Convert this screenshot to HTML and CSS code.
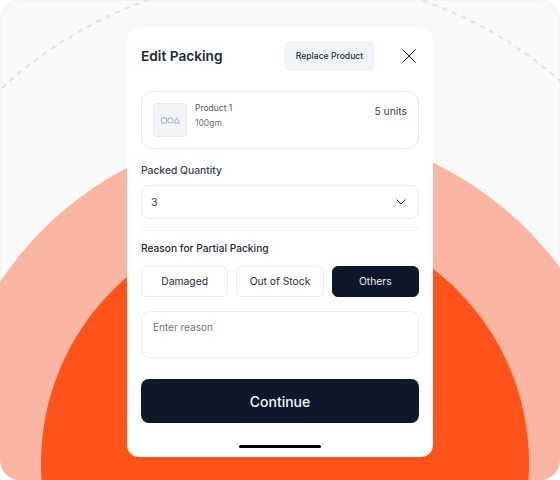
FILE: index.html
```html
<!DOCTYPE html>
<html lang="en">
<head>
<meta charset="utf-8">
<title>Edit Packing</title>
<link rel="stylesheet" href="styles.css">
</head>
<body>
<div class="stage">
  <svg class="backdrop" width="560" height="480" viewBox="0 0 560 480" aria-hidden="true">
    <circle cx="285" cy="393" r="416" fill="none" stroke="#e2e2e4" stroke-width="2" stroke-dasharray="5 5.500"/>
    <circle cx="285" cy="471" r="342" fill="#fbb5a3"/>
    <circle cx="285" cy="463" r="244" fill="#ff5319"/>
  </svg>
  <main class="card">
    <header class="head">
      <h1 class="title">Edit Packing</h1>
      <button class="replace">Replace Product</button>
      <svg class="close" width="14" height="14" viewBox="0 0 14 14" aria-hidden="true"><path d="M.5.5l13 13M13.5.5l-13 13" fill="none" stroke="#0f172a" stroke-width="1"/></svg>
    </header>
    <section class="product">
      <div class="thumb">
        <svg width="19" height="7" viewBox="0 0 19 7" aria-hidden="true"><g fill="none" stroke="#8b97a8" stroke-width=".7"><rect x=".4" y="1" width="5.200" height="5" rx=".4"/><circle cx="9.500" cy="3.500" r="2.600"/><path d="M15.800.8l2.800 5.200h-5.600z"/></g></svg>
      </div>
      <div class="info">
        <div class="name">Product 1</div>
        <div class="weight">100gm</div>
      </div>
      <div class="units">5 units</div>
    </section>
    <label class="label qty-label">Packed Quantity</label>
    <div class="select">
      <span>3</span>
      <svg width="10" height="6" viewBox="0 0 10 6" aria-hidden="true"><path d="M.5.5L5 5 9.500.5" fill="none" stroke="#1e293b" stroke-width="1"/></svg>
    </div>
    <hr class="rule">
    <div class="label reason-label">Reason for Partial Packing</div>
    <div class="chips">
      <button class="chip">Damaged</button>
      <button class="chip">Out of Stock</button>
      <button class="chip chip-on">Others</button>
    </div>
    <div class="reason">Enter reason</div>
    <button class="continue">Continue</button>
    <div class="home"></div>
  </main>
</div>
</body>
</html>
```

FILE: styles.css
```css
* { box-sizing: border-box; }
html, body { margin: 0; padding: 0; background: #fff; }
body { font-family: Inter, "Liberation Sans", sans-serif; color: #0f172a; }
.stage {
  position: relative;
  width: 560px;
  height: 480px;
  background: #f9f9fa;
  box-shadow: inset 0 0 0 1px #f3f3f4;
  border-radius: 20px;
  overflow: hidden;
  padding-top: 27px;
  display: flex;
  justify-content: center;
  align-items: flex-start;
}
.backdrop { position: absolute; left: 0; top: 0; }
.card {
  position: relative;
  width: 306px;
  height: 430px;
  background: #fff;
  border-radius: 12px;
  padding: 14px 14px 0;
  display: flex;
  flex-direction: column;
}
.head { display: flex; align-items: center; height: 30px; }
.title { margin: -1px 0 0; font-size: 13.700px; font-weight: 600; color: #1e293b; flex: 1; }
.replace {
  width: 91px;
  height: 30px;
  border: 0;
  border-radius: 6px;
  background: #f1f5f9;
  font: 500 8.600px Inter, sans-serif;
  color: #1e293b;
  padding: 0;
}
.close { margin: 0 3px 0 27px; }
.product {
  margin-top: 20px;
  height: 58px;
  border: 1px solid #e2e8f0;
  border-radius: 12px;
  padding: 11px;
  display: flex;
}
.thumb {
  width: 34px;
  height: 34px;
  background: #f1f5f9;
  border: 1px solid #e8edf3;
  border-radius: 4px;
  display: flex;
  align-items: center;
  justify-content: center;
}
.info { flex: 1; margin-left: 8px; font-size: 8.500px; color: #475569; }
.name { line-height: 11px; }
.weight { line-height: 11px; margin-top: 4px; color: #64748b; }
.units { font-size: 10.300px; line-height: 14px; color: #334155; margin-top: 1px; }
.label { display: block; font-size: 10.300px; font-weight: 500; line-height: 14px; color: #334155; }
.qty-label { margin-top: 14px; }
.select {
  margin-top: 8px;
  height: 34px;
  border: 1px solid #e8edf3;
  border-radius: 8px;
  padding: 0 12px 0 9px;
  display: flex;
  align-items: center;
  justify-content: space-between;
  font-size: 10.500px;
  color: #334155;
}
.rule { width: 100%; margin: 8px 0 0; border: 0; border-top: 1px solid #eef1f5; }
.reason-label { margin-top: 13px; font-size: 10.200px; font-weight: 500; color: #1e293b; }
.chips { margin-top: 11px; display: flex; gap: 8px; }
.chip {
  flex: 1;
  height: 31px;
  padding: 0 0 1px;
  border: 1px solid #e8edf3;
  border-radius: 6px;
  background: #fff;
  font: 400 10.300px Inter, sans-serif;
  color: #1e293b;
}
.chip-on { background: #0f172a; border-color: #0f172a; color: #e8edf3; }
.reason {
  margin-top: 14px;
  height: 47px;
  border: 1px solid #e8edf3;
  border-radius: 8px;
  padding: 8px 11px;
  font-size: 10px;
  line-height: 14px;
  color: #6b7280;
}
.continue {
  margin-top: 21px;
  height: 44px;
  border: 0;
  border-radius: 8px;
  background: #0f172a;
  color: #f1f5f9;
  font: 500 14px Inter, sans-serif;
  padding: 0;
}
.home {
  margin: 22px auto 0;
  width: 82px;
  height: 3px;
  border-radius: 2px;
  background: #000;
}
```
